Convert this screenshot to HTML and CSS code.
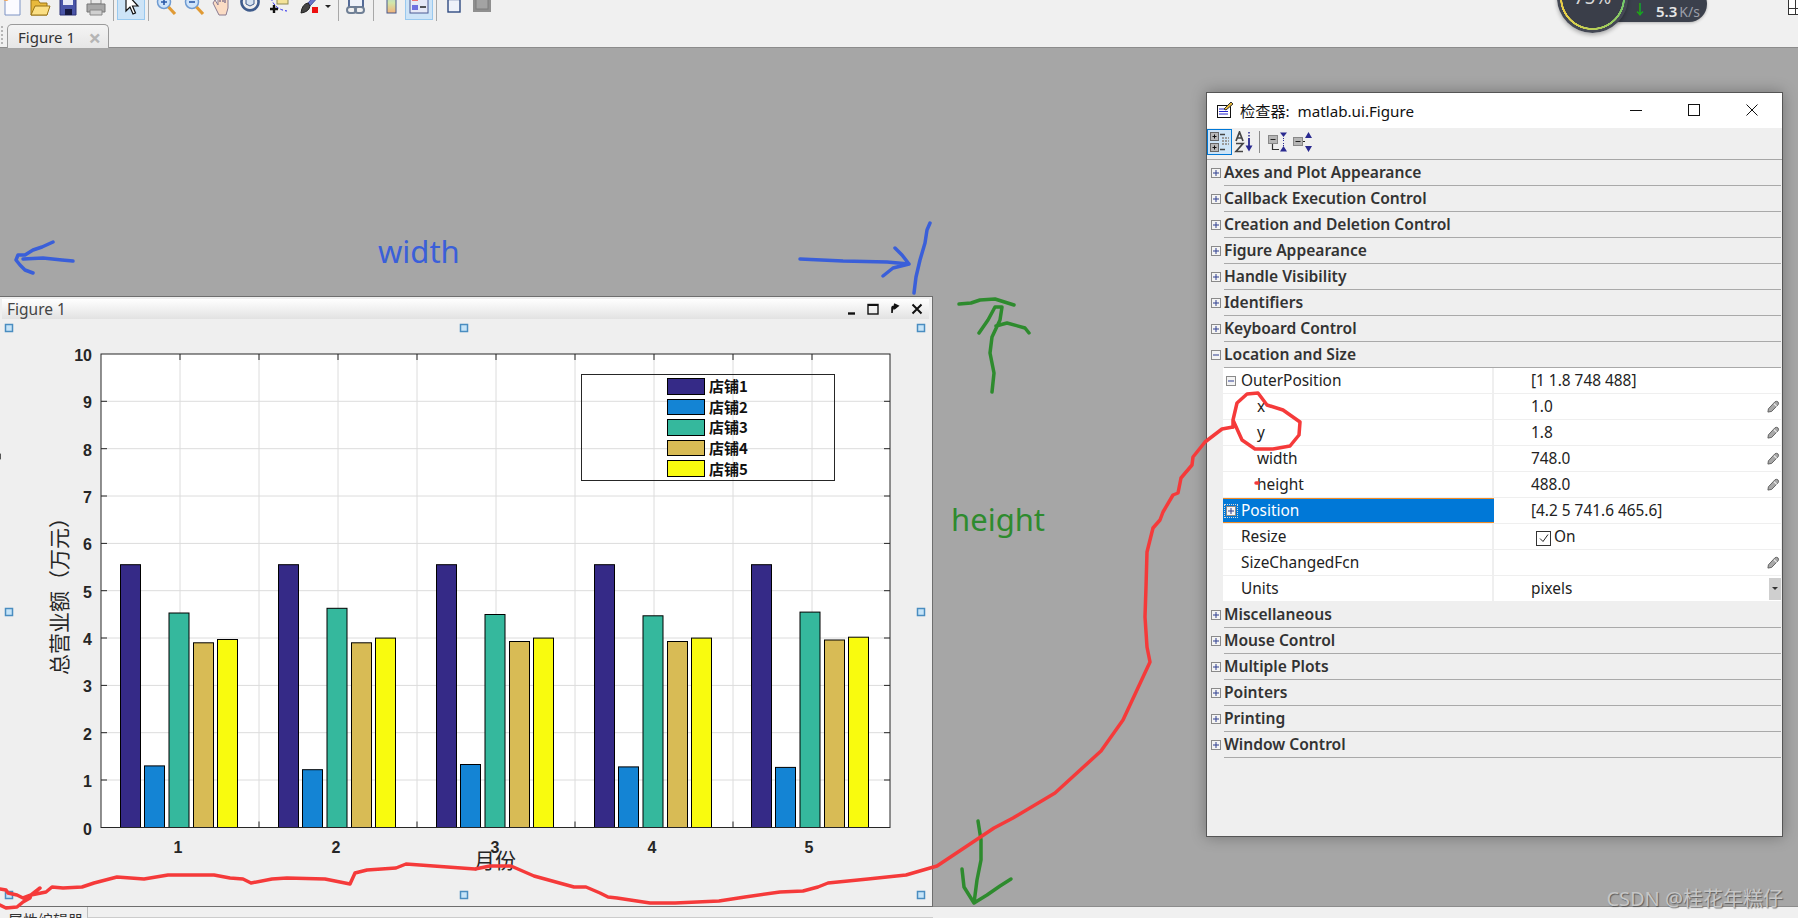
FILE: index.html
```html
<!DOCTYPE html>
<html>
<head>
    <meta charset="utf-8">
    <title>Figure 1</title>
    <link rel="stylesheet" href="styles.css">
</head>
<body>
    <svg class="defs" width="0" height="0">
        <symbol id="pencil" viewBox="0 0 14 14">
            <path d="M1.500 9.500 L8.500 2 Q10 0.800 11.800 2 Q13 3.500 12 5 L5 12.300 L1 13 Z" fill="#a8a8a8" stroke="#5c5c5c" stroke-width="1"/>
            <path d="M7.500 4 L10.500 6.800" stroke="#eee" stroke-width="1.200"/>
        </symbol>
        <symbol id="plus" viewBox="0 0 10 10">
            <rect x="0.5" y="0.5" width="9" height="9" fill="#f4f4f4" stroke="#8a8a8a"/>
            <path d="M2 5 H8 M5 2 V8" stroke="#2f3f8f" stroke-width="1"/>
        </symbol>
        <symbol id="minus" viewBox="0 0 10 10">
            <rect x="0.5" y="0.5" width="9" height="9" fill="#f4f4f4" stroke="#8a8a8a"/>
            <path d="M2 5 H8" stroke="#2f3f8f" stroke-width="1"/>
        </symbol>
    </svg>

    <!-- main figure toolbar, its icons are cut by the top of the shot -->
    <div class="toolbar">
        <span class="tool"><svg viewBox="0 0 22 22"><path d="M4 1 H15 L19 5 V20 H4 Z" fill="#fbfbff" stroke="#7d93c4"/><circle cx="5" cy="3" r="3" fill="#f2a65a"/></svg></span>
        <span class="tool"><svg viewBox="0 0 22 22"><path d="M2 5 H9 L11 8 H18 V20 H2 Z" fill="#e8b93c" stroke="#9a7417"/><path d="M2 20 L6 11 H21 L18 20 Z" fill="#fbdf84" stroke="#9a7417"/></svg></span>
        <span class="tool"><svg viewBox="0 0 22 22"><path d="M3 1 H19 V20 H3 Z" fill="#4a55a8" stroke="#2c3278"/><rect x="6" y="1" width="10" height="9" fill="#e8eaf6"/><rect x="8" y="14" width="7" height="6" fill="#15183f"/></svg></span>
        <span class="tool"><svg viewBox="0 0 22 22"><path d="M6 1 H16 V9 H6 Z" fill="#e8e8e8" stroke="#888"/><path d="M2 9 H20 V17 H2 Z" fill="#a8a8a8" stroke="#777"/><path d="M5 15 H17 V20 H5 Z" fill="#d0d0d0" stroke="#888"/></svg></span>
        <span class="sep"></span>
        <span class="tool on"><svg viewBox="0 0 22 22"><path d="M6 -2 L6 16 L10 12 L13 19 L15.5 18 L12.5 11 L18 11 Z" fill="#fff" stroke="#111" stroke-width="1.2"/></svg></span>
        <span class="sep"></span>
        <span class="tool"><svg viewBox="0 0 22 22"><circle cx="9" cy="7" r="6.5" fill="#cfe4fa" stroke="#6f9bd1" stroke-width="1.5"/><path d="M6 7 H12 M9 4 V10" stroke="#2b59a8" stroke-width="1.6"/><path d="M13.5 12 L20 19" stroke="#e09a35" stroke-width="3.2"/></svg></span>
        <span class="tool"><svg viewBox="0 0 22 22"><circle cx="9" cy="7" r="6.5" fill="#cfe4fa" stroke="#6f9bd1" stroke-width="1.5"/><path d="M6 7 H12" stroke="#2b59a8" stroke-width="1.6"/><path d="M13.5 12 L20 19" stroke="#e09a35" stroke-width="3.2"/></svg></span>
        <span class="tool"><svg viewBox="0 0 22 22"><path d="M4 5 L7 10 V1 H9 V7 V-1 H12 V7 V0 H14 V8 V3 H17 V13 L15 20 H8 L2 8 Z" fill="#fbdcc4" stroke="#8a7a90"/></svg></span>
        <span class="tool"><svg viewBox="0 0 22 22"><path d="M3 4 A8.5 8.5 0 1 0 19 4" fill="none" stroke="#3f5c8c" stroke-width="2.6"/><path d="M7 3 L11 1 L15 3 V9 L11 11 L7 9 Z" fill="#d6e3f2" stroke="#3f5c8c"/></svg></span>
        <span class="tool gap"><svg viewBox="0 0 22 22"><rect x="8" y="-3" width="11" height="12" fill="#f4e39a" stroke="#8f8a55"/><path d="M1 14 H9 M5 10 V18" stroke="#111" stroke-width="2.4"/><path d="M1 -2 Q3 14 18 16" fill="none" stroke="#2222ee" stroke-dasharray="3 2"/></svg></span>
        <span class="tool gap"><svg viewBox="0 0 22 22"><path d="M19 -3 L9 8 L11 11 L21 0 Z" fill="#6a74c8" stroke="#454f9e"/><path d="M9 8 Q3 9 2 18 Q10 17 11 11 Z" fill="#444" stroke="#222"/><rect x="13" y="12" width="6" height="6" fill="#ee0f0f"/></svg></span>
        <span class="drop"></span>
        <span class="sep wide"></span>
        <span class="tool"><svg viewBox="0 0 22 22"><path d="M4 -2 H18 V12 H4 Z" fill="#eef2fa" stroke="#2f4a80" stroke-width="1.6"/><path d="M4 3 H18" stroke="#2f4a80" stroke-width="2"/><rect x="2" y="12" width="9" height="6" rx="3" fill="none" stroke="#6f7f95" stroke-width="2"/><rect x="10" y="12" width="9" height="6" rx="3" fill="none" stroke="#6f7f95" stroke-width="2"/></svg></span>
        <span class="sep"></span>
        <span class="tool"><svg viewBox="0 0 22 22"><defs><linearGradient id="cbar" x1="0" y1="0" x2="0" y2="1"><stop offset="0" stop-color="#9fd6e8"/><stop offset="0.5" stop-color="#d3e6a8"/><stop offset="1" stop-color="#f2b27a"/></linearGradient></defs><rect x="7" y="-2" width="9" height="20" fill="url(#cbar)" stroke="#47598a"/></svg></span>
        <span class="tool on"><svg viewBox="0 0 22 22"><rect x="2" y="-2" width="18" height="20" fill="#e6e9f6" stroke="#4d5b94"/><rect x="4" y="1" width="6" height="5" fill="#ee6f6f"/><rect x="4" y="10" width="6" height="5" fill="#6f70e0"/><path d="M12 3 H18 M12 12 H18" stroke="#222" stroke-width="1.4"/></svg></span>
        <span class="sep"></span>
        <span class="tool"><svg viewBox="0 0 22 22"><rect x="5" y="-2" width="12" height="19" fill="#eef2fa" stroke="#2f4a80" stroke-width="1.4"/><path d="M5 4 H17" stroke="#2f4a80" stroke-width="2.4"/></svg></span>
        <span class="tool"><svg viewBox="0 0 22 22"><rect x="2" y="-2" width="18" height="19" fill="#8f8f8f"/><rect x="5" y="-2" width="12" height="16" fill="#a3a3a3" stroke="#7c7c7c"/></svg></span>
    </div>

    <div class="tabstrip">
        <span class="grip"></span>
        <div class="tab">Figure 1<span class="tab-x">&times;</span></div>
    </div>

    <!-- net speed widget floating over the toolbar -->
    <div class="meter">
        <div class="meter-pill"><span class="down-arrow">&#8595;</span><b>5.3</b><i>K/s</i></div>
        <div class="meter-dial"><span>75%</span></div>
    </div>
    <div class="corner-icon"></div>

    <div class="desktop">
        <div class="figure">
            <div class="fig-title">
                <span>Figure 1</span>
                <div class="fig-btns">
                    <svg width="12" height="12" viewBox="0 0 12 12"><path d="M3 10.5 H10" stroke="#111" stroke-width="2.4"/></svg>
                    <svg width="12" height="12" viewBox="0 0 12 12"><rect x="1" y="1.5" width="10" height="9.5" fill="none" stroke="#111" stroke-width="1.4"/><path d="M1 2 H11" stroke="#111" stroke-width="2"/></svg>
                    <svg width="12" height="12" viewBox="0 0 12 12"><path d="M3 10 V5 Q3 3 6 3 M5 1 L9 3 L5 6" fill="#111" stroke="#111" stroke-width="1.6"/></svg>
                    <svg width="12" height="12" viewBox="0 0 12 12"><path d="M1.5 1.5 L10.5 10.5 M10.5 1.5 L1.5 10.5" stroke="#111" stroke-width="2"/></svg>
                </div>
            </div>
            <svg class="chart" width="932" height="586" viewBox="0 320 932 586">
                <rect x="101" y="354" width="789" height="473.5" fill="#fff"/>
                <path class="grid" d="M180 354V827.5M259 354V827.5M338 354V827.5M417 354V827.5M496 354V827.5M575 354V827.5M654 354V827.5M733 354V827.5M812 354V827.5M101 401.3H890M101 448.7H890M101 496H890M101 543.4H890M101 590.7H890M101 638H890M101 685.4H890M101 732.7H890M101 780H890"/>
                <path class="ticks" d="M180 354v6M259 354v6M338 354v6M417 354v6M496 354v6M575 354v6M654 354v6M733 354v6M812 354v6M180 827.5v-6M259 827.5v-6M338 827.5v-6M417 827.5v-6M496 827.5v-6M575 827.5v-6M654 827.5v-6M733 827.5v-6M812 827.5v-6M101 401.3h6M101 448.7h6M101 496h6M101 543.4h6M101 590.7h6M101 638h6M101 685.4h6M101 732.7h6M101 780h6M890 401.3h-6M890 448.7h-6M890 496h-6M890 543.4h-6M890 590.7h-6M890 638h-6M890 685.4h-6M890 732.7h-6M890 780h-6"/>
                <g class="bars s1">
                    <rect x="120.5" y="564.7" width="20" height="262.8"/>
                    <rect x="278.5" y="564.7" width="20" height="262.8"/>
                    <rect x="436.5" y="564.7" width="20" height="262.8"/>
                    <rect x="594.5" y="564.7" width="20" height="262.8"/>
                    <rect x="751.5" y="564.7" width="20" height="262.8"/>
                </g>
                <g class="bars s2">
                    <rect x="144.5" y="765.9" width="20" height="61.6"/>
                    <rect x="302.5" y="769.7" width="20" height="57.8"/>
                    <rect x="460.5" y="764.5" width="20" height="63"/>
                    <rect x="618.5" y="766.9" width="20" height="60.6"/>
                    <rect x="775.5" y="767.4" width="20" height="60.1"/>
                </g>
                <g class="bars s3">
                    <rect x="169" y="613" width="20" height="214.5"/>
                    <rect x="327" y="608.3" width="20" height="219.2"/>
                    <rect x="485" y="614.5" width="20" height="213"/>
                    <rect x="643" y="615.8" width="20" height="211.7"/>
                    <rect x="800" y="612.1" width="20" height="215.4"/>
                </g>
                <g class="bars s4">
                    <rect x="193.5" y="642.8" width="20" height="184.7"/>
                    <rect x="351.5" y="642.8" width="20" height="184.7"/>
                    <rect x="509.5" y="641.5" width="20" height="186"/>
                    <rect x="667.5" y="641.5" width="20" height="186"/>
                    <rect x="824.5" y="640" width="20" height="187.5"/>
                </g>
                <g class="bars s5">
                    <rect x="217.5" y="639.5" width="20" height="188"/>
                    <rect x="375.5" y="638.1" width="20" height="189.4"/>
                    <rect x="533.5" y="638.1" width="20" height="189.4"/>
                    <rect x="691.5" y="638.1" width="20" height="189.4"/>
                    <rect x="848.5" y="637.2" width="20" height="190.3"/>
                </g>
                <rect class="frame" x="101" y="354" width="789" height="473.5"/>
                <g class="ylabels">
                    <text x="92" y="361">10</text><text x="92" y="408">9</text><text x="92" y="456">8</text>
                    <text x="92" y="503">7</text><text x="92" y="550">6</text><text x="92" y="598">5</text>
                    <text x="92" y="645">4</text><text x="92" y="692">3</text><text x="92" y="740">2</text>
                    <text x="92" y="787">1</text><text x="92" y="835">0</text>
                </g>
                <g class="xlabels">
                    <text x="178" y="853">1</text><text x="336" y="853">2</text><text x="495" y="853">3</text>
                    <text x="652" y="853">4</text><text x="809" y="853">5</text>
                </g>
                <text class="axis-title" transform="translate(67 591) rotate(-90)">总营业额（万元）</text>
                <text class="axis-title" x="495" y="868">月份</text>
                <rect class="frame" x="581.5" y="374.5" width="253" height="106"/>
                <g class="bars s1"><rect x="667.5" y="378.5" width="37" height="16"/></g>
                <g class="bars s2"><rect x="667.5" y="399.5" width="37" height="15"/></g>
                <g class="bars s3"><rect x="667.5" y="419.5" width="37" height="16"/></g>
                <g class="bars s4"><rect x="667.5" y="440.5" width="37" height="15"/></g>
                <g class="bars s5"><rect x="667.5" y="460.5" width="37" height="16"/></g>
                <g class="legend-text">
                    <text x="709" y="392">店铺1</text><text x="709" y="413">店铺2</text><text x="709" y="433">店铺3</text>
                    <text x="709" y="454">店铺4</text><text x="709" y="475">店铺5</text>
                </g>
                <g class="handles">
                    <rect x="5.5" y="324.5" width="7" height="7"/><rect x="460.5" y="324.5" width="7" height="7"/><rect x="917.5" y="324.5" width="7" height="7"/>
                    <rect x="5.5" y="608.5" width="7" height="7"/><rect x="917.5" y="608.5" width="7" height="7"/>
                    <rect x="5.5" y="891.5" width="7" height="7"/><rect x="460.5" y="891.5" width="7" height="7"/><rect x="917.5" y="891.5" width="7" height="7"/>
                </g>
            </svg>
        </div>

        <div class="inspector">
            <div class="insp-title">
                <svg width="18" height="18" viewBox="0 0 18 18"><rect x="1.5" y="4.5" width="13" height="12" fill="#fff" stroke="#111"/><path d="M3 8 H10 M3 10.5 H12 M3 13 H12" stroke="#2222cc"/><path d="M8 8 L15 1 L17 3 L10 9 Z" fill="#e8b93c" stroke="#333"/></svg>
                <span class="insp-name">检查器:&nbsp; matlab.ui.Figure</span>
                <div class="win-btns">
                    <svg width="12" height="12" viewBox="0 0 12 12"><path d="M0 6.5 H12" stroke="#111"/></svg>
                    <svg width="12" height="12" viewBox="0 0 12 12"><rect x="0.5" y="0.5" width="11" height="11" fill="none" stroke="#111"/></svg>
                    <svg width="12" height="12" viewBox="0 0 12 12"><path d="M0.5 0.5 L11.5 11.5 M11.5 0.5 L0.5 11.5" stroke="#111"/></svg>
                </div>
            </div>
            <div class="insp-tools">
                <span class="itool on"><svg width="22" height="22" viewBox="0 0 22 22"><rect x="1.500" y="1.500" width="8" height="8" fill="#b8b8b8" stroke="#666"/><path d="M3.500 5.500H7.500M5.500 3.500V7.500" stroke="#111"/><rect x="1.500" y="12.500" width="8" height="8" fill="#b8b8b8" stroke="#666"/><path d="M3.500 16.500H7.500M5.500 14.500V18.500" stroke="#111"/><path d="M11 3.500H16M11 18.500H16" stroke="#444" stroke-width="1.500"/><path d="M13 7H20M13 10H20M13 13H20" stroke="#9a9a9a" stroke-width="2" stroke-dasharray="2 1"/></svg></span>
                <span class="itool"><svg width="22" height="22" viewBox="0 0 22 22"><path d="M2 10 L5.500 1 L9 10 M3.200 7 H7.800 M2 12.500 H9 L2 20.500 H9" fill="none" stroke="#444" stroke-width="1.700"/><path d="M15 1 V6" stroke="#2a2a90" stroke-width="1.500" stroke-dasharray="1.500 1.500"/><path d="M15 7 V15" stroke="#2a2a90" stroke-width="1.800"/><path d="M11.500 14.500 H18.500 L15 20.500 Z" fill="#2a2a90"/></svg></span>
                <span class="isep"></span>
                <span class="itool"><svg width="22" height="22" viewBox="0 0 22 22"><rect x="1.500" y="4.500" width="9" height="8" fill="#b5b5b5" stroke="#888"/><path d="M3.500 8.500H8.500" stroke="#222"/><path d="M5.500 13V18.500H12" fill="none" stroke="#333" stroke-width="1.200"/><path d="M13 1.500H20L16.500 6Z M13 20.500H20L16.500 15Z" fill="#2a2a90"/><path d="M16.500 7V10M16.500 12V15" stroke="#2a2a90" stroke-dasharray="1 1"/></svg></span>
                <span class="itool"><svg width="22" height="22" viewBox="0 0 22 22"><rect x="1.500" y="6.500" width="9" height="8" fill="#b5b5b5" stroke="#888"/><path d="M3.500 10.500H8.500M11 10.500H13" stroke="#222"/><path d="M13 7H20L16.500 1Z M13 15H20L16.500 21Z" fill="#2a2a90"/></svg></span>
            </div>
            <div class="props">
                <div class="group"><svg class="exp"><use href="#plus"/></svg><span class="group-name">Axes and Plot Appearance</span></div>
                <div class="group"><svg class="exp"><use href="#plus"/></svg><span class="group-name">Callback Execution Control</span></div>
                <div class="group"><svg class="exp"><use href="#plus"/></svg><span class="group-name">Creation and Deletion Control</span></div>
                <div class="group"><svg class="exp"><use href="#plus"/></svg><span class="group-name">Figure Appearance</span></div>
                <div class="group"><svg class="exp"><use href="#plus"/></svg><span class="group-name">Handle Visibility</span></div>
                <div class="group"><svg class="exp"><use href="#plus"/></svg><span class="group-name">Identifiers</span></div>
                <div class="group"><svg class="exp"><use href="#plus"/></svg><span class="group-name">Keyboard Control</span></div>
                <div class="group"><svg class="exp"><use href="#minus"/></svg><span class="group-name">Location and Size</span></div>

                <div class="prop"><div class="key"><svg class="exp"><use href="#minus"/></svg>OuterPosition</div><div class="val">[1 1.8 748 488]</div></div>
                <div class="prop"><div class="key sub">x</div><div class="val">1.0<svg class="pen"><use href="#pencil"/></svg></div></div>
                <div class="prop"><div class="key sub">y</div><div class="val">1.8<svg class="pen"><use href="#pencil"/></svg></div></div>
                <div class="prop"><div class="key sub">width</div><div class="val">748.0<svg class="pen"><use href="#pencil"/></svg></div></div>
                <div class="prop"><div class="key sub">height</div><div class="val">488.0<svg class="pen"><use href="#pencil"/></svg></div></div>
                <div class="prop selected"><div class="key"><svg class="exp"><use href="#plus"/></svg>Position</div><div class="val">[4.2 5 741.6 465.6]</div></div>
                <div class="prop"><div class="key plain">Resize</div><div class="val"><span class="check"><svg width="12" height="12" viewBox="0 0 12 12"><path d="M2 6.500 L5 9.500 L10 2.500" fill="none" stroke="#222"/></svg></span>On</div></div>
                <div class="prop"><div class="key plain">SizeChangedFcn</div><div class="val"><svg class="pen"><use href="#pencil"/></svg></div></div>
                <div class="prop"><div class="key plain">Units</div><div class="val">pixels<span class="combo"></span></div></div>

                <div class="group"><svg class="exp"><use href="#plus"/></svg><span class="group-name">Miscellaneous</span></div>
                <div class="group"><svg class="exp"><use href="#plus"/></svg><span class="group-name">Mouse Control</span></div>
                <div class="group"><svg class="exp"><use href="#plus"/></svg><span class="group-name">Multiple Plots</span></div>
                <div class="group"><svg class="exp"><use href="#plus"/></svg><span class="group-name">Pointers</span></div>
                <div class="group"><svg class="exp"><use href="#plus"/></svg><span class="group-name">Printing</span></div>
                <div class="group"><svg class="exp"><use href="#plus"/></svg><span class="group-name">Window Control</span></div>
            </div>
        </div>
    </div>

    <div class="bottombar">
        <div class="bottom-tab">属性编辑器</div>
    </div>

    <!-- pen marks drawn on top of the screenshot -->
    <svg class="marks" width="1798" height="918" viewBox="0 0 1798 918">
        <g class="blue-pen">
            <path d="M53 242L42 247L33 250L25 255L18 255L16 260L20 265L25 270L33 273M23 259L43 258L62 260L73 261"/>
            <path d="M800 259L843 261L887 262L909 264M895 248L902 255L909 264L893 268L883 276M930 223L927 230L925 243L920 260L916 277L914 293"/>
        </g>
        <g class="green-pen">
            <path d="M959 304L971 303L980 300L995 299L1014 305M979 333L988 320L995 307L1002 307L1000 320L992 337L990 353L994 373L992 392M996 326L1007 323L1025 328L1029 333"/>
            <path d="M978 821L981 840L981 860L977 880L974 903M962 869L964 887L974 903L987 895L1000 886L1011 879"/>
        </g>
        <g class="red-pen">
            <path d="M0 889L6 890L8 893L17 895L23 898L31 895L40 888M0 905L6 908L17 907L23 902L30 898L31 895L46 892L52 887L63 888L82 887L94 883L117 877L144 879L168 875L214 875L230 878L243 879L251 883L272 879L287 878L325 879L350 884L355 873L367 870L396 868L406 864L475 869L490 866L511 866L534 876L574 887L586 887L600 893L608 897L617 898L650 903L675 903L719 901L745 897L780 892L803 891L818 887L828 883L868 879L906 875L937 866L994 828L1013 818L1055 793L1101 751L1123 720L1150 662L1147 647L1145 617L1146 587L1147 552L1153 528L1160 520L1163 512L1173 495L1178 493L1181 478L1192 465L1193 457L1205 442L1222 429L1233 427"/>
            <path d="M1233 427L1233 420L1237 403L1247 394L1258 393L1267 405L1283 410L1300 422L1299 435L1290 446L1273 449L1255 449L1242 440L1233 420"/>
            <path d="M1256 483L1258 483"/>
        </g>
        <text class="word-width" x="378" y="263">width</text>
        <text class="word-height" x="951" y="531">height</text>
        <path d="M0.500 454V459" stroke="#555"/>
    </svg>
    <div class="watermark">CSDN @桂花年糕仔</div>
</body>
</html>
```
FILE: styles.css
```css
* {
    box-sizing: border-box;
}
html, body {
    margin: 0;
    height: 100%;
    overflow: hidden;
}
body {
    position: relative;
    display: flex;
    flex-direction: column;
    width: 1798px;
    height: 918px;
    background: #f0f0f0;
    font-family: "Noto Sans", "Noto Sans CJK SC", sans-serif;
}
.defs {
    position: absolute;
}

/* Toolbar */
.toolbar {
    display: flex;
    height: 21px;
    margin-left: -2px;
    overflow: hidden;
    flex: none;
}
.tool {
    display: block;
    width: 28px;
    height: 20px;
    overflow: hidden;
    flex: none;
}
.tool svg {
    display: block;
    width: 22px;
    height: 22px;
    margin: -5px 3px 0;
    overflow: visible;
}
.tool.on {
    background: #cde4f7;
    border: 1px solid #99c9ef;
    border-top: none;
}
.tool.on svg {
    margin: -5px 2px 0;
}
.tool.gap {
    margin-left: 2px;
}
.sep {
    width: 1px;
    height: 21px;
    margin: 0 3px 0 3px;
    background: #a8a8a8;
    flex: none;
}
.sep.wide {
    margin: 0 3px 0 6px;
}
.drop {
    width: 8px;
    flex: none;
    position: relative;
}
.drop::after {
    content: "";
    position: absolute;
    top: 5px;
    left: 1px;
    border: 3px solid transparent;
    border-top: 3px solid #222;
}
.tabstrip {
    display: flex;
    align-items: flex-end;
    height: 27px;
    flex: none;
    border-bottom: 1px solid #8c8c8c;
}
.grip {
    width: 2px;
    height: 18px;
    margin: 0 4px 3px 1px;
    border-left: 2px dotted #b5b5b5;
}
.tab {
    display: flex;
    align-items: center;
    justify-content: space-between;
    width: 102px;
    height: 24px;
    padding: 0 7px 0 10px;
    margin-bottom: -1px;
    font-size: 15px;
    color: #333;
    background: linear-gradient(#f4f4f4, #e6e6e6);
    border: 1px solid #9a9a9a;
    border-bottom: none;
    border-radius: 5px 5px 0 0;
}
.tab-x {
    font-size: 22px;
    font-weight: bold;
    line-height: 1;
    color: #b5b5b5;
}

/* Speed widget */
.meter {
    position: absolute;
    left: 1557px;
    top: -40px;
    width: 152px;
    height: 74px;
}
.meter-pill {
    position: absolute;
    left: 36px;
    top: 26px;
    width: 114px;
    height: 36px;
    padding: 14px 0 0 63px;
    display: flex;
    align-items: center;
    gap: 2px;
    font-size: 15px;
    color: #e6e6e6;
    background: #3b404c;
    border-radius: 0 18px 18px 0;
    box-shadow: 0 1px 3px rgba(0, 0, 0, 0.25);
}
.meter-pill b {
    font-weight: 600;
}
.meter-pill i {
    font-size: 14px;
    font-style: normal;
    color: #9a9ea8;
}
.down-arrow {
    position: absolute;
    left: 40px;
    top: 12px;
    font-size: 14px;
    font-weight: bold;
    color: #18a818;
}
.meter-dial {
    position: absolute;
    left: 0;
    top: 2px;
    width: 71px;
    height: 71px;
    padding-top: 22px;
    text-align: center;
    font-size: 19px;
    line-height: 26px;
    color: #d8d8d8;
    background: radial-gradient(closest-side, #3a3e49 0 85%, transparent 86% 91%, #444854 92%), conic-gradient(from 90deg, #6cc86c, #e8d24a 40%, #e89a3a);
    border-radius: 50%;
    box-shadow: 0 2px 4px rgba(0, 0, 0, 0.3);
}
.corner-icon {
    position: absolute;
    left: 1788px;
    top: -1px;
    width: 10px;
    height: 16px;
    border: 1px solid #333;
    border-right: none;
    background: linear-gradient(#333, #333) 0 8px / 100% 1px no-repeat, linear-gradient(#333, #333) 6px 0 / 1px 100% no-repeat, #fff;
}

/* Desktop with the two windows */
.desktop {
    position: relative;
    flex: 1;
    background: #a6a6a6;
}
.figure {
    position: absolute;
    left: 0;
    top: 248px;
    width: 933px;
    height: 611px;
    padding: 2px 3px 0 2px;
    background: #efefef;
    border: 1px solid #6e6e6e;
    border-left: none;
}
.fig-title {
    display: flex;
    align-items: center;
    justify-content: space-between;
    height: 20px;
    padding: 0 6px 0 5px;
    font-size: 15.5px;
    color: #444;
    background: linear-gradient(#fff, #e2e2e2);
}
.fig-btns {
    display: flex;
    gap: 10px;
}
.chart {
    position: absolute;
    left: 0;
    top: 23px;
}
.grid {
    fill: none;
    stroke: #dcdcdc;
    stroke-width: 1;
}
.ticks {
    fill: none;
    stroke: #262626;
    stroke-width: 1;
}
.frame {
    fill: none;
    stroke: #262626;
    stroke-width: 1;
}
.bars rect {
    stroke: #000;
    stroke-width: 1;
}
.s1 rect { fill: #352a87; }
.s2 rect { fill: #1484d4; }
.s3 rect { fill: #35b89d; }
.s4 rect { fill: #d8bb55; }
.s5 rect { fill: #f9fb0e; }
.ylabels text {
    font: bold 16px "Liberation Sans", sans-serif;
    fill: #262626;
    text-anchor: end;
}
.xlabels text {
    font: bold 16px "Liberation Sans", sans-serif;
    fill: #262626;
    text-anchor: middle;
}
.axis-title {
    font: 21px "Noto Sans CJK SC", sans-serif;
    fill: #262626;
    text-anchor: middle;
}
.legend-text text {
    font: bold 15px "Noto Sans CJK SC", sans-serif;
    fill: #111;
}
.handles rect {
    fill: #c6e4f8;
    stroke: #4a8dc0;
    stroke-width: 1.5;
}

/* Inspector */
.inspector {
    position: absolute;
    left: 1206px;
    top: 44px;
    width: 577px;
    height: 745px;
    background: #efefef;
    border: 1px solid #555;
    box-shadow: 0 0 14px rgba(0, 0, 0, 0.3);
}
.insp-title {
    display: flex;
    align-items: center;
    height: 35px;
    padding: 0 0 2px 9px;
    background: #fff;
}
.insp-name {
    margin-left: 6px;
    font-size: 15.2px;
    color: #111;
}
.win-btns {
    display: flex;
    gap: 46px;
    margin-left: auto;
    padding-right: 24px;
}
.insp-tools {
    display: flex;
    align-items: center;
    height: 32px;
    padding: 0 0 4px 0;
    border-bottom: 1px solid #a6a6a6;
}
.itool {
    display: flex;
    align-items: center;
    justify-content: center;
    width: 25px;
    height: 26px;
}
.itool.on {
    background: #cde4f7;
    border: 1px solid #0078d7;
}
.isep {
    width: 1px;
    height: 22px;
    margin: 0 5px 0 2px;
    background: #8c8c8c;
}
.group {
    display: flex;
    align-items: center;
    height: 26px;
    font-size: 15.6px;
    font-weight: 600;
    color: #333;
}
.group .exp {
    margin: 0 3px 0 4px;
}
.group-name {
    flex: 1;
    align-self: stretch;
    line-height: 25px;
    margin-right: 1px;
    border-bottom: 1px solid #a9a9a9;
}
.exp {
    width: 10px;
    height: 10px;
    flex: none;
}
.prop {
    display: grid;
    grid-template-columns: 271px 1fr;
    height: 26px;
    margin: 0 1px 0 16px;
    font-size: 15.4px;
    line-height: 25px;
    color: #222;
    background: #fff;
    border-bottom: 1px solid #efefef;
}
.key {
    display: flex;
    align-items: center;
    gap: 5px;
    padding-left: 3px;
    white-space: nowrap;
    border-right: 2px solid #efefef;
}
.key.plain {
    padding-left: 18px;
}
.key.sub {
    padding-left: 34px;
}
.val {
    position: relative;
    padding-left: 37px;
    white-space: nowrap;
}
.pen {
    position: absolute;
    right: 1px;
    top: 6px;
    width: 13px;
    height: 13px;
}
.prop.selected .key {
    height: 25px;
    color: #fff;
    background: #0078d7;
    border-top: 1px solid #f08a24;
    border-bottom: 1px solid #f08a24;
    border-right: none;
}
.prop.selected .exp {
    outline: 1px dotted #d8d8d8;
    outline-offset: 1px;
}
.check {
    display: inline-flex;
    align-items: center;
    justify-content: center;
    width: 15px;
    height: 15px;
    margin: 0 3px 0 5px;
    vertical-align: -2px;
    border: 1px solid #333;
}
.combo {
    position: absolute;
    right: 0;
    top: 2px;
    width: 12px;
    height: 22px;
    background: #cfcfcf;
}
.combo::after {
    content: "";
    position: absolute;
    left: 3px;
    top: 9px;
    border: 3px solid transparent;
    border-top: 3px solid #333;
}

/* Bottom strip */
.bottombar {
    height: 12px;
    flex: none;
    overflow: hidden;
    border-top: 1px solid #8c8c8c;
    background: linear-gradient(#ccc, #ccc) 0 100% / 933px 1px no-repeat;
}
.bottom-tab {
    width: 88px;
    height: 12px;
    padding: 3px 0 0 8px;
    font-size: 15px;
    line-height: 20px;
    color: #333;
    background: #f0f0f0;
    border-right: 1px solid #bdbdbd;
}

/* Pen marks */
.marks {
    position: absolute;
    left: 0;
    top: 0;
    pointer-events: none;
}
.marks path {
    fill: none;
    stroke-linecap: round;
    stroke-linejoin: round;
}
.blue-pen path {
    stroke: #3a5fd9;
    stroke-width: 3.5;
}
.green-pen path {
    stroke: #2e8b2e;
    stroke-width: 3.5;
}
.red-pen path {
    stroke: #f53a3a;
    stroke-width: 3.5;
}
.word-width {
    font: 31px "Noto Sans", sans-serif;
    fill: #3a5fd9;
}
.word-height {
    font: 31px "Noto Sans", sans-serif;
    fill: #2e8b2e;
}
.watermark {
    position: absolute;
    right: 15px;
    bottom: 6px;
    font-size: 20px;
    line-height: 26px;
    color: #c6c6c6;
    text-shadow: 1px 1px 1px rgba(50, 50, 50, 0.6);
}
```
